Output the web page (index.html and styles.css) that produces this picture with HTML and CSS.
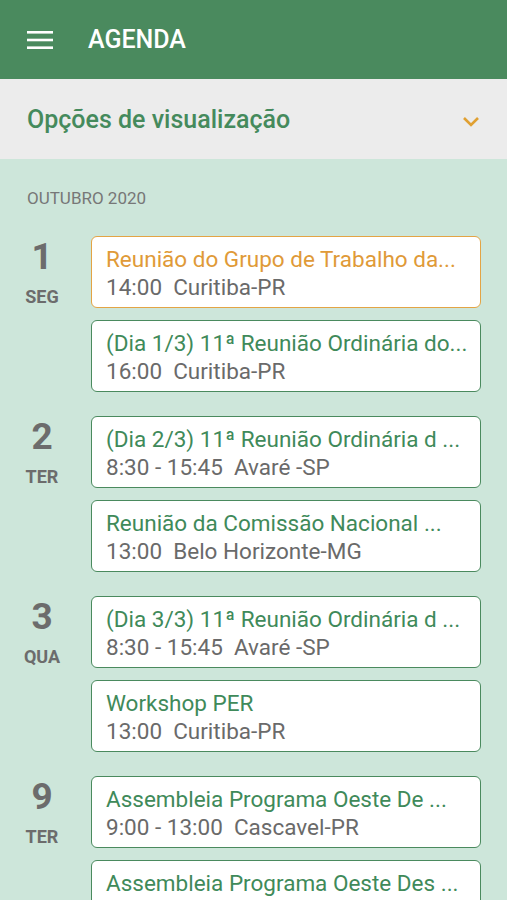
FILE: index.html
```html
<!DOCTYPE html>
<html>
<head>
  <meta charset="utf-8">
  <title>Agenda</title>
  <link rel="stylesheet" href="styles.css">
</head>
<body>
  <div class="topbar">
    <svg class="menu" width="26" height="18" viewBox="0 0 26 18">
      <rect x="0" y="0" width="26" height="2.6" fill="#fff"/>
      <rect x="0" y="7.7" width="26" height="2.6" fill="#fff"/>
      <rect x="0" y="15.4" width="26" height="2.6" fill="#fff"/>
    </svg>
    <div class="title">AGENDA</div>
  </div>

  <div class="options">
    <span>Opções de visualização</span>
    <svg class="chevron" width="18" height="11" viewBox="0 0 18 11">
      <path d="M2 2 L9 9 L16 2" fill="none" stroke="#e0a032" stroke-width="2.6"/>
    </svg>
  </div>

  <div class="list">
    <div class="month">OUTUBRO 2020</div>

    <div class="day">
      <div class="date"><div class="num">1</div><div class="wd">SEG</div></div>
      <div class="events">
        <div class="card active">
          <div class="name">Reunião do Grupo de Trabalho da...</div>
          <div class="info">14:00&nbsp; Curitiba-PR</div>
        </div>
        <div class="card">
          <div class="name">(Dia 1/3) 11ª Reunião Ordinária do...</div>
          <div class="info">16:00&nbsp; Curitiba-PR</div>
        </div>
      </div>
    </div>

    <div class="day">
      <div class="date"><div class="num">2</div><div class="wd">TER</div></div>
      <div class="events">
        <div class="card">
          <div class="name">(Dia 2/3) 11ª Reunião Ordinária d ...</div>
          <div class="info">8:30 - 15:45&nbsp; Avaré -SP</div>
        </div>
        <div class="card">
          <div class="name">Reunião da Comissão Nacional ...</div>
          <div class="info">13:00&nbsp; Belo Horizonte-MG</div>
        </div>
      </div>
    </div>

    <div class="day">
      <div class="date"><div class="num">3</div><div class="wd">QUA</div></div>
      <div class="events">
        <div class="card">
          <div class="name">(Dia 3/3) 11ª Reunião Ordinária d ...</div>
          <div class="info">8:30 - 15:45&nbsp; Avaré -SP</div>
        </div>
        <div class="card">
          <div class="name">Workshop PER</div>
          <div class="info">13:00&nbsp; Curitiba-PR</div>
        </div>
      </div>
    </div>

    <div class="day">
      <div class="date"><div class="num">9</div><div class="wd">TER</div></div>
      <div class="events">
        <div class="card">
          <div class="name">Assembleia Programa Oeste De ...</div>
          <div class="info">9:00 - 13:00&nbsp; Cascavel-PR</div>
        </div>
        <div class="card">
          <div class="name">Assembleia Programa Oeste Des ...</div>
          <div class="info">9:00 - 13:00&nbsp; Cascavel-PR</div>
        </div>
      </div>
    </div>
  </div>
</body>
</html>
```

FILE: styles.css
```css
body {
  margin: 0;
  font-family: Roboto, "Noto Sans", sans-serif;
  background-color: #cde6da;
  overflow: hidden;
  height: 900px;
}

.topbar {
  height: 79px;
  background-color: #4a8a5e;
  display: flex;
  align-items: center;
  padding-left: 27px;
  box-sizing: border-box;
}

.menu {
  margin-right: 35px;
  margin-top: 1px;
}

.title {
  color: #fff;
  font-size: 25px;
  font-weight: 500;
}

.options {
  height: 80px;
  background-color: #ececec;
  display: flex;
  align-items: center;
  justify-content: space-between;
  padding: 0 27px 0 27px;
  box-sizing: border-box;
  color: #458a5c;
  font-size: 25px;
  font-weight: 500;
}

.chevron {
  margin-top: 5px;
}

.list {
  padding: 29px 26px 0 0;
}

.month {
  color: #777;
  font-size: 17px;
  line-height: 20px;
  padding-left: 27px;
  margin-bottom: 28px;
}

.day {
  display: flex;
  margin-bottom: 24px;
}

.date {
  flex-shrink: 0;
  width: 91px;
  padding-right: 7px;
  box-sizing: border-box;
  text-align: center;
  color: #6c6c6c;
  font-weight: 700;
}

.num {
  font-size: 37px;
  line-height: 40px;
  margin-top: 1px;
}

.wd {
  font-size: 18px;
  margin-top: 9px;
}

.events {
  flex: 1;
  min-width: 0;
  display: flex;
  flex-direction: column;
  gap: 12px;
}

.card {
  background-color: #fff;
  border: 1.5px solid #4a8a5e;
  border-radius: 6px;
  height: 72px;
  box-sizing: border-box;
  padding: 8px 14px 0 14px;
  white-space: nowrap;
  overflow: hidden;
}

.card.active {
  border-color: #e3a445;
}

.name {
  color: #3f8a5a;
  font-size: 22.5px;
  line-height: 28px;
}

.card.active .name {
  color: #e09a38;
}

.info {
  color: #6a6a6a;
  font-size: 22.5px;
  line-height: 28px;
}
```
